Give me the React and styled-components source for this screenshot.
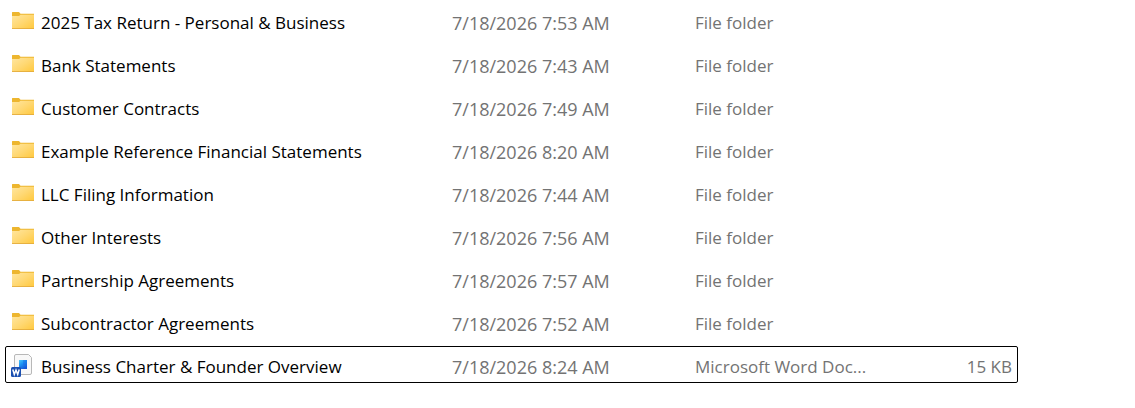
import React from "react";
import styled, { createGlobalStyle } from "styled-components";

const GlobalStyle = createGlobalStyle`
  * { box-sizing: border-box; }
  body {
    margin: 0;
    background: #fff;
    font-family: "Open Sans", "Noto Sans", sans-serif;
    font-size: 17px;
    line-height: 24px;
    color: #000;
  }
`;

const Pane = styled.main`
  padding: 2px 117px 20px 5px;
`;

const FileTable = styled.table`
  width: 100%;
  table-layout: fixed;
  border-collapse: collapse;
`;

const NameCol = styled.col``;
const FixedCol = styled.col`
  width: ${(p) => p.$width}px;
`;

const Row = styled.tr`
  height: 37px;
  border-radius: 2px;
  outline: ${(p) => (p.$focused ? "1px solid #000" : "none")};
  outline-offset: -1px;
`;

const RowGroup = styled.tbody`
  &::after {
    content: "";
    display: table-row;
    height: 6px;
  }
`;

const Cell = styled.td`
  padding: 5px 6px 0 0;
  color: #737373;
  text-align: ${(p) => p.$align || "left"};
  white-space: nowrap;
  overflow: hidden;
  text-overflow: ellipsis;
`;

const DateCell = styled(Cell)`
  padding-top: 4px;
  font-size: 18px;
`;

const NameCell = styled(Cell)`
  padding-top: 0;
  color: #000;
`;

const NameContent = styled.div`
  display: flex;
  align-items: center;
  gap: 6px;
  padding-left: 6px;
`;

const Label = styled.span`
  padding-top: 5px;
`;

const Icon = styled.svg`
  flex: none;
  display: block;
  width: 24px;
  height: 24px;
`;

function FolderIcon() {
  return (
    <Icon viewBox="0 0 24 24" aria-hidden="true">
      <defs>
        <linearGradient id="folder-face" x1="0" y1="0" x2="1" y2="1">
          <stop offset="0" stopColor="#ffe6a0" />
          <stop offset="0.5" stopColor="#ffd873" />
          <stop offset="1" stopColor="#ffc83c" />
        </linearGradient>
      </defs>
      <path d="M1 3.5a.5.5 0 0 1 .5-.5H8l1.5 1.7H23V8H1z" fill="#edb62f" />
      <path d="M1 7h7l1.5-1.3H23V20H1z" fill="url(#folder-face)" />
      <path d="M1 19.2h22v.8H1z" fill="#e2a93b" />
    </Icon>
  );
}

function WordIcon() {
  return (
    <Icon viewBox="0 0 24 24" aria-hidden="true">
      <defs>
        <linearGradient id="word-lines" x1="0" y1="0" x2="0.6" y2="1">
          <stop offset="0" stopColor="#4cc8f8" />
          <stop offset="0.45" stopColor="#1e96f5" />
          <stop offset="1" stopColor="#1557d8" />
        </linearGradient>
      </defs>
      <path d="M5 1.5h12.5l3 3V20a1.5 1.5 0 0 1-1.5 1.5H5A1.5 1.5 0 0 1 3.5 20V3A1.5 1.5 0 0 1 5 1.5z" fill="#f8f8f8" stroke="#b8b8b8" />
      <rect x="8" y="7" width="8" height="9" fill="url(#word-lines)" />
      <rect x="12" y="7" width="4" height="5" fill="#1766e2" opacity="0.4" />
      <rect x="0" y="14" width="10" height="10" rx="1.5" fill="#1b4fb0" />
      <path d="M1.8 16.500l1.500 5L5 17l1.700 4.500 1.500-5" fill="none" stroke="#fff" strokeWidth="1.5" />
    </Icon>
  );
}

const files = [
  { name: "2025 Tax Return - Personal & Business", date: "7/18/2026 7:53 AM" },
  { name: "Bank Statements", date: "7/18/2026 7:43 AM" },
  { name: "Customer Contracts", date: "7/18/2026 7:49 AM" },
  { name: "Example Reference Financial Statements", date: "7/18/2026 8:20 AM" },
  { name: "LLC Filing Information", date: "7/18/2026 7:44 AM" },
  { name: "Other Interests", date: "7/18/2026 7:56 AM" },
  { name: "Partnership Agreements", date: "7/18/2026 7:57 AM" },
  { name: "Subcontractor Agreements", date: "7/18/2026 7:52 AM" },
  {
    name: "Business Charter & Founder Overview",
    date: "7/18/2026 8:24 AM",
    type: "Microsoft Word Doc...",
    size: "15 KB",
    focused: true,
  },
];

export default function App() {
  return (
    <>
      <GlobalStyle />
      <Pane>
        <FileTable aria-label="Files">
          <colgroup>
            <NameCol />
            <FixedCol $width={243} />
            <FixedCol $width={203} />
            <FixedCol $width={120} />
          </colgroup>
          {files.map((file) => (
            <RowGroup key={file.name}>
              <Row $focused={file.focused}>
                <NameCell>
                  <NameContent>
                    {file.type ? <WordIcon /> : <FolderIcon />}
                    <Label>{file.name}</Label>
                  </NameContent>
                </NameCell>
                <DateCell>{file.date}</DateCell>
                <Cell>{file.type || "File folder"}</Cell>
                <Cell $align="right">{file.size}</Cell>
              </Row>
            </RowGroup>
          ))}
        </FileTable>
      </Pane>
    </>
  );
}
